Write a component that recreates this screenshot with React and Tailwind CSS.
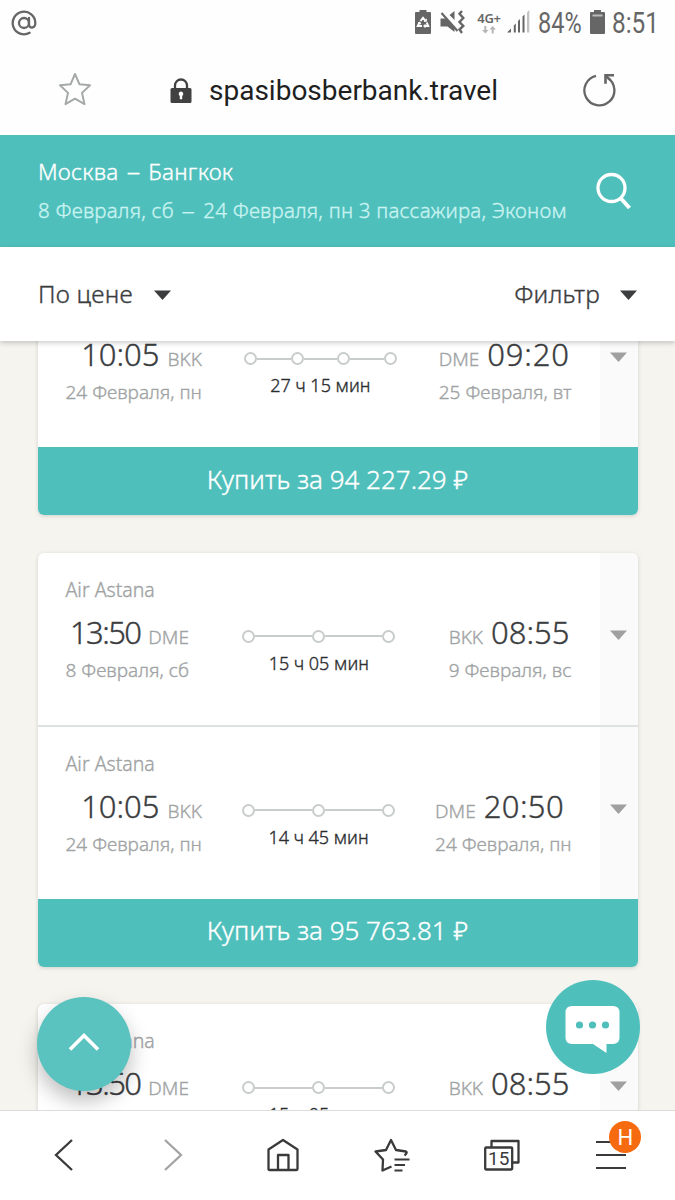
import React from 'react'

const cards = [
  {
    price: '94 227.29 ₽',
    legs: [
      {
        airline: '', stops: 4, duration: '27 ч 15 мин',
        from: { time: '10:05', code: 'BKK', date: '24 Февраля, пн' },
        to: { time: '09:20', code: 'DME', date: '25 Февраля, вт', tracking: 'tracking-[0.8px]' },
      },
    ],
  },
  {
    price: '95 763.81 ₽',
    legs: [
      {
        airline: 'Air Astana', stops: 3, duration: '15 ч 05 мин',
        from: { time: '13:50', code: 'DME', date: '8 Февраля, сб', tracking: 'tracking-[-1.6px]' },
        to: { time: '08:55', code: 'BKK', date: '9 Февраля, вс' },
      },
      {
        airline: 'Air Astana', stops: 3, duration: '14 ч 45 мин',
        from: { time: '10:05', code: 'BKK', date: '24 Февраля, пн' },
        to: { time: '20:50', code: 'DME', date: '24 Февраля, пн', tracking: 'tracking-[0.4px]' },
      },
    ],
  },
  {
    price: '95 763.81 ₽',
    legs: [
      {
        airline: 'Air Astana', stops: 3, duration: '15 ч 05 мин',
        from: { time: '13:50', code: 'DME', date: '8 Февраля, сб', tracking: 'tracking-[-1.6px]' },
        to: { time: '08:55', code: 'BKK', date: '9 Февраля, вс' },
      },
    ],
  },
]

const Triangle = ({ className }) => (
  <svg width="17" height="10" viewBox="0 0 17 10" className={className}>
    <path d="M0 0.500h17L8.500 10z" fill="currentColor" />
  </svg>
)

const StatusBar = () => (
  <div className="h-[46px] shrink-0 flex items-center pl-[11px] pr-[15px] text-[#666] font-[Roboto,sans-serif] font-normal [-webkit-text-stroke:0]">
    <svg width="26" height="26" viewBox="0 0 26 26" fill="none" stroke="currentColor" strokeWidth="2.300" strokeLinecap="round">
      <circle cx="13" cy="13" r="5" />
      <path d="M18 8v6.300c0 4.600 6.300 4.400 6.300-1.300A11.300 11.300 0 1 0 18.600 22.800" />
    </svg>

    {/* battery saver */}
    <svg width="16" height="24" viewBox="0 0 16 24" className="ml-auto -mt-0.5">
      <path d="M4.500 0h7v2H15q1 0 1 1v20q0 1-1 1H1q-1 0-1-1V3q0-1 1-1h3.500z" fill="#666" />
      <g fill="none" stroke="#fff" strokeWidth="2">
        <path d="M5.500 11L8 7.800l2.500 3.200M11.700 12.500l1.500 3.500h-3.700M7 16H2.800l1.700-3.500" />
        <path d="M9 11h2.200V8.800M10.500 14.500L9 16l1.500 1.500M3 13.500l1.700-1 1 1.700" strokeWidth="1.300" />
      </g>
    </svg>

    {/* vibrate / muted */}
    <svg width="25" height="24" viewBox="0 0 25 24" className="ml-[9px] -mt-0.5">
      <path d="M0.500 8.500h5l9 9V22l-7-5.500h-7zM9.500 5L14.500 1v9z" fill="#666" />
      <path d="M1.500 3l16 18" stroke="#666" strokeWidth="2.200" />
      <path d="M22 1l-2.500 2.800L23.300 8l-3.800 4 3.800 4-3.800 3.500L22 23" fill="none" stroke="#666" strokeWidth="2.400" />
    </svg>

    <div className="ml-[11px] flex flex-col items-center w-[26px]">
      <span className="font-[Noto_Sans,sans-serif] font-semibold text-[13px] leading-[13px] whitespace-nowrap tracking-[-0.2px]">4G+</span>
      <svg width="14" height="8" viewBox="0 0 14 8" fill="#b5b5b5" className="mt-px">
        <path d="M2.300 0h2v4h2.300L3.300 7.500 0 4h2.300zM9.700 7.500h2v-4H14L10.700 0 7.400 3.500h2.300z" />
      </svg>
    </div>

    <svg width="23" height="24" viewBox="0 0 23 24" className="ml-[5px] -mt-0.5">
      <path d="M0 22.500l4-4v4zM6.800 15.500l2-2v9H6.800zM11 11l2-2v13.500h-2zM15.500 6.500l2-2v18h-2z" fill="#666" />
      <path d="M20 2.500L22.300 0v22.500H20z" fill="#c2c2c2" />
    </svg>

    <span className="ml-2 mt-px w-[45px] text-[29px] leading-none"><span className="inline-block origin-left scale-x-[0.81]">84%</span></span>
    <svg width="15" height="24" viewBox="0 0 15 24" className="ml-[7px] -mt-0.5">
      <path d="M4 0h7v2h3q1 0 1 1v20q0 1-1 1H1q-1 0-1-1V3q0-1 1-1h3z" fill="#666" />
      <path d="M2.500 4.500h10v2h-10z" fill="#bbb" />
    </svg>
    <span className="ml-[7px] mt-px w-[48px] text-[29px] leading-none"><span className="inline-block origin-left scale-x-[0.84]">8:51</span></span>
  </div>
)

const AddressBar = () => (
  <div className="h-[89px] shrink-0 flex items-center pl-[59px] pr-[58px]">
    <svg width="32" height="34" viewBox="0 0 32 34" fill="none" stroke="#a5a8a8" strokeWidth="2" strokeLinejoin="round" className="-mt-1">
      <path d="M16 2l4.500 10.300 10.500.900-8 7.700 2.500 11.200L16 26.700 6.500 32.100 9 20.900 1 13.200l10.500-.900z" />
    </svg>
    <svg width="22" height="26" viewBox="0 0 22 26" className="ml-[79px]">
      <path d="M5 11V7.500a6 6 0 0 1 12 0V11" fill="none" stroke="#414141" strokeWidth="2.300" />
      <rect x="0.500" y="10" width="21" height="15" rx="1.500" fill="#414141" />
      <path d="M11 13.500a2.400 2.400 0 0 1 1.200 4.400v3.300h-2.400v-3.300A2.400 2.400 0 0 1 11 13.500z" fill="#fff" />
    </svg>
    <span className="ml-[17px] mt-px font-[Roboto,sans-serif] font-normal [-webkit-text-stroke:0] text-[28px] leading-8 text-[#1f1f1f] whitespace-nowrap">spasibosberbank.travel</span>
    <svg width="34" height="34" viewBox="0 0 34 34" fill="none" stroke="#666" strokeWidth="2.300" className="ml-auto -mt-0.5">
      <path d="M13 2.800A15 15 0 1 0 24.500 4.800" />
      <path d="M31 2.300h-8.500v8.500" strokeWidth="2.600" />
      <path d="M23 2.800l4.500 4.500" />
    </svg>
  </div>
)

const SearchHeader = () => (
  <div className="h-[112px] shrink-0 bg-[#4fbfbc] text-white flex items-center pl-[38px] pr-[43px]">
    <div className="whitespace-nowrap">
      <div className="text-[22.5px] leading-[38px] tracking-[0.25px]">Москва <span className="inline-block mx-[3px] scale-x-[1.2]">–</span> Бангкок</div>
      <div className="text-[20.5px] leading-[38px] tracking-[0.2px] text-[#c9f3f1]">8 Февраля, сб <span className="inline-block mx-[4px] scale-x-[1.3]">–</span> 24 Февраля, пн 3 пассажира, Эконом</div>
    </div>
    <svg width="36" height="38" viewBox="0 0 36 38" fill="none" stroke="#fff" strokeWidth="3.300" className="ml-auto -mt-px">
      <circle cx="15.500" cy="16" r="13.500" />
      <path d="M24.500 26l9 10" strokeWidth="4" />
    </svg>
  </div>
)

const FilterBar = () => (
  <div className="relative z-10 h-[94px] shrink-0 bg-white flex items-center justify-between px-[38px] text-[24.5px] tracking-[0.2px] text-[#3b3d3f] shadow-[0_2px_5px_rgba(0,0,0,0.2)]">
    <div className="flex items-center gap-[21px]">
      <span>По цене</span>
      <Triangle className="mt-0.5" />
    </div>
    <div className="flex items-center gap-[20px]">
      <span>Фильтр</span>
      <Triangle className="mt-0.5" />
    </div>
  </div>
)

const Stops = ({ count }) => (
  <div className="w-[153px] flex items-center">
    {Array.from({ length: count }).map((_, i) => (
      <React.Fragment key={i}>
        {i > 0 && <span className="h-0.5 flex-1 bg-[#c9cccc]" />}
        <span className="size-[13px] rounded-full border-2 border-[#c9cccc]" />
      </React.Fragment>
    ))}
  </div>
)

const Time = ({ value, className }) => (
  <span className={`text-[31px] text-[#3b3d3f] ${className || ''}`}>{value}</span>
)

const Leg = ({ leg }) => (
  <div className="h-[172px] flex">
    <div className="flex-1 pt-[25px] pl-7 pr-7">
      <div className="h-6 text-[19.5px] leading-6 text-[#a0a3a4]">{leg.airline}</div>
      <div className="mt-2.5 flex justify-between whitespace-nowrap text-[#a0a3a4] text-[19px]">
        <div className="text-right">
          <div className="h-[42px] flex items-baseline justify-end gap-2 leading-[40px]">
            <Time value={leg.from.time} className={leg.from.tracking} />
            <span>{leg.from.code}</span>
          </div>
          <div className="mt-1 leading-6">{leg.from.date}</div>
        </div>
        <div className="mt-[18px] flex flex-col items-center">
          <Stops count={leg.stops} />
          <div className="mt-2 text-[18px] leading-6 text-[#2b2d2f]">{leg.duration}</div>
        </div>
        <div>
          <div className="h-[42px] flex items-baseline gap-2 leading-[40px]">
            <span>{leg.to.code}</span>
            <Time value={leg.to.time} className={leg.to.tracking} />
          </div>
          <div className="mt-1 leading-6">{leg.to.date}</div>
        </div>
      </div>
    </div>
    <div className="w-[38px] bg-[#fafafa] flex justify-center pt-[77px] text-[#a0a0a0]">
      <Triangle />
    </div>
  </div>
)

const TicketCard = ({ card }) => (
  <div className="shrink-0 rounded-md bg-white overflow-hidden shadow-[0_1px_4px_rgba(0,0,0,0.15)]">
    {card.legs.map((leg, i) => (
      <React.Fragment key={i}>
        {i > 0 && <div className="h-0.5 bg-[#dfe2e2]" />}
        <Leg leg={leg} />
      </React.Fragment>
    ))}
    <button className="block w-full h-[68px] pb-1 bg-[#4fbfbc] text-white text-[26px]">
      Купить за {card.price}
    </button>
  </div>
)

const BottomNav = () => (
  <div className="h-[90px] shrink-0 border-t border-[#dcdcdc] bg-white grid grid-cols-6 items-center justify-items-center px-[9px] pb-px">
    <svg width="20" height="34" viewBox="0 0 20 34" fill="none" stroke="#3a3a3a" strokeWidth="2.300">
      <path d="M18 2L2 17l16 15" />
    </svg>
    <svg width="20" height="34" viewBox="0 0 20 34" fill="none" stroke="#a3a3a3" strokeWidth="2.300">
      <path d="M2 2l16 15L2 32" />
    </svg>
    <svg width="34" height="34" viewBox="0 0 34 34" fill="none" stroke="#3a3a3a" strokeWidth="2.300" strokeLinejoin="round">
      <path d="M2.500 11.500L17 2l14.500 9.500V31q0 1-1 1h-27q-1 0-1-1z" />
      <path d="M12 32V17h10.500v15" />
    </svg>
    <svg width="36" height="34" viewBox="0 0 36 34" fill="none" stroke="#3a3a3a" strokeWidth="2.300" strokeLinejoin="round">
      <path d="M17.500 28.500l-9 4 .5-11L1.500 13.500l10.500-1.500 5-10 5 10 10 1.500q1.500.500-.500 3l-1 1" />
      <path d="M20.500 21.500h15M20.500 27h10.500M20.500 32.500h8" strokeWidth="2" />
    </svg>
    <div className="relative h-[34px] w-9 flex items-end">
      <svg width="36" height="34" viewBox="0 0 36 34" fill="none" stroke="#3a3a3a" strokeWidth="2.300" strokeLinejoin="round">
        <rect x="1.200" y="9.500" width="27" height="22" rx="1" />
        <path d="M7.500 9V3h27v21.500h-6" />
      </svg>
      <span className="absolute left-0 top-[10px] w-[30px] text-center font-[Roboto,sans-serif] font-normal [-webkit-text-stroke:0] text-[19px] leading-[22px] text-[#3a3a3a]">15</span>
    </div>
    <div className="relative h-[34px] w-[30px]">
      <svg width="30" height="34" viewBox="0 0 30 34" stroke="#3a3a3a" strokeWidth="2.200">
        <path d="M0 4h30M0 17h30M0 30h30" />
      </svg>
      <span className="absolute left-[13px] -top-[17px] size-8 rounded-full bg-[#f76b10] text-white font-[Roboto,sans-serif] font-normal [-webkit-text-stroke:0] text-[22px] leading-[33px] text-center">H</span>
    </div>
  </div>
)

const App = () => {
  return (
    <div className="w-[675px] h-[1200px] bg-[#fefefe] flex flex-col overflow-hidden font-[Noto_Sans,sans-serif] font-light [-webkit-text-stroke:0.35px]">
      <StatusBar />
      <AddressBar />
      <SearchHeader />
      <FilterBar />

      <div className="relative flex-1 min-h-0 overflow-hidden bg-[#f5f4ef]">
        {/* results, scrolled part of the way down */}
        <div className="-mt-[66px] px-[37.5px] flex flex-col gap-[37.5px]">
          {cards.map((card, i) => <TicketCard key={i} card={card} />)}
        </div>

        {/* floating buttons */}
        <button className="absolute left-[37px] top-[656px] size-[94px] rounded-full bg-[#5ac2bf] flex items-center justify-center shadow-[0_10px_20px_rgba(0,0,0,0.25)]">
          <svg width="32" height="20" viewBox="0 0 32 20" fill="none" stroke="#fff" strokeWidth="3.600" className="-mt-1">
            <path d="M2 17.500L16 3.500l14 14" />
          </svg>
        </button>
        <button className="absolute left-[545.5px] top-[639px] size-[94px] rounded-full bg-[#4fbfbc] flex items-center justify-center">
          <svg width="55" height="48" viewBox="0 0 55 48" className="mt-1">
            <path d="M7 1h41q6.500 0 6.500 6.500v25q0 6.500-6.500 6.500h-6.500v9L28 39H7q-6.500 0-6.500-6.500v-25Q0.500 1 7 1z" fill="#fff" />
            <g fill="#4fbfbc">
              <circle cx="14.500" cy="20" r="3.600" />
              <circle cx="27.500" cy="20" r="3.600" />
              <circle cx="40.500" cy="20" r="3.600" />
            </g>
          </svg>
        </button>
      </div>

      <BottomNav />
    </div>
  )
}

export default App
